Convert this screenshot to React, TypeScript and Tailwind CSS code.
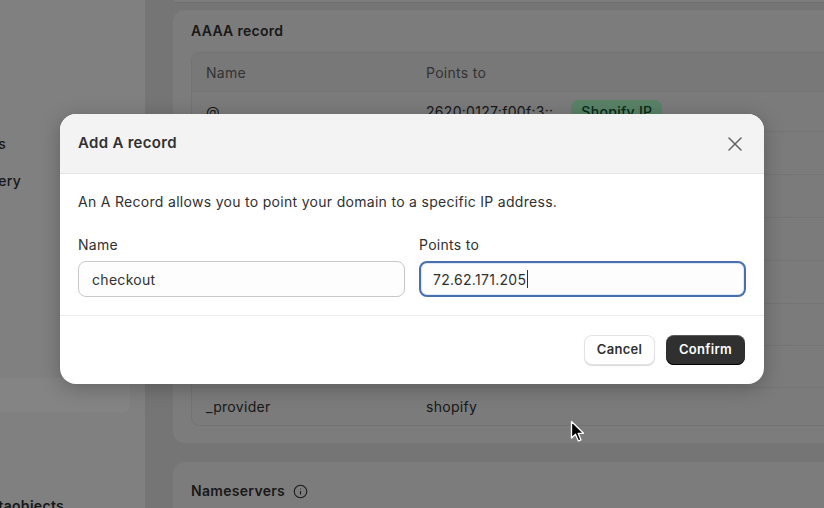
import { X, Info } from 'lucide-react';

export default function App() {
    return (
        <div className="relative h-[508px] w-[824px] overflow-hidden bg-[#dedede] font-['Inter',sans-serif] text-[14px] tracking-[0.3px] text-[#303030]">
            <div className="flex h-full">
                {/* Settings sidebar (scrolled, text cut at the left edge) */}
                <aside className="w-[145px] shrink-0 bg-[#f2f2f2] pt-[134px] font-medium">
                    <div className="flex h-5 w-[6px] items-center justify-end whitespace-nowrap leading-5">Customer accounts</div>
                    <div className="mt-[17px] flex h-5 w-[21px] items-center justify-end whitespace-nowrap leading-5">Shipping and delivery</div>
                    <div className="mt-[187px] h-[34px] w-[130px] rounded-r-lg bg-[#fafafa]" />
                    <div className="mt-[84px] flex h-5 w-[64px] items-center justify-end whitespace-nowrap font-semibold leading-5">Metaobjects</div>
                </aside>

                {/* Main content */}
                <main className="flex-1 pl-[28px]">
                    <div className="h-[3px] w-[700px] rounded-b-xl border-b border-[#d4d4d4] bg-[#ebebeb]" />

                    {/* AAAA record card */}
                    <section className="mt-[7px] w-[700px] rounded-xl bg-[#ebebeb] pb-[17px] pl-[18px] pt-[11px]">
                        <h3 className="font-semibold leading-5">AAAA record</h3>
                        <div className="mt-[11px] overflow-hidden rounded-l-lg border border-[#d8d8d8] bg-[#e8e8e8]">
                            <div className="grid h-[38px] grid-cols-[220px_1fr] items-center bg-[#e3e3e3] px-[14px] text-[#616161]">
                                <span>Name</span>
                                <span>Points to</span>
                            </div>
                            <div className="grid h-[40px] grid-cols-[220px_1fr] items-center border-t border-[#dcdcdc] px-[14px]">
                                <span>@</span>
                                <div className="flex items-center gap-[18px]">
                                    <span>2620:0127:f00f:3::</span>
                                    <span className="rounded-lg bg-[#a8f5c0] px-[10px] py-px font-medium text-[#0c5132]">Shopify IP</span>
                                </div>
                            </div>
                            {[43, 43, 43, 43, 42, 42].map((h, i) => (
                                <div key={i} style={{ height: h }} className="border-t border-[#dcdcdc]" />
                            ))}
                            <div className="grid h-[38px] grid-cols-[220px_1fr] items-center border-t border-[#dcdcdc] px-[14px]">
                                <span>_provider</span>
                                <span>shopify</span>
                            </div>
                        </div>
                    </section>

                    {/* Nameservers card */}
                    <section className="mt-[19px] h-[80px] w-[700px] rounded-xl bg-[#ebebeb] pl-[18px] pt-[19px]">
                        <div className="flex items-center gap-2">
                            <h3 className="font-semibold leading-5">Nameservers</h3>
                            <Info size={15} strokeWidth={1.75} className="text-[#303030]" />
                        </div>
                    </section>
                </main>
            </div>

            {/* Modal overlay */}
            <div className="absolute inset-0 flex justify-center bg-black/[0.47] pt-[114px]">
                <div className="h-fit w-[704px] overflow-hidden rounded-2xl bg-white shadow-[0_4px_20px_rgba(0,0,0,0.25)]">
                    {/* Header */}
                    <div className="flex h-[60px] items-center justify-between border-b border-[#e3e3e3] bg-[#f3f3f3] pl-[18px] pr-[17px]">
                        <h2 className="text-[15px] font-semibold">Add A record</h2>
                        <button className="flex h-6 w-6 items-center justify-center text-[#616161]">
                            <X size={24} strokeWidth={1.5} />
                        </button>
                    </div>

                    {/* Body */}
                    <div className="px-[18px] pb-[18px] pt-[18px]">
                        <p className="leading-5">An A Record allows you to point your domain to a specific IP address.</p>
                        <div className="mt-[23px] grid grid-cols-2 gap-[14px]">
                            <div>
                                <label className="block leading-5">Name</label>
                                <div className="mt-[6px] flex h-[36px] items-center rounded-lg border border-[#c8c8c8] bg-[#fdfdfd] px-[13px]">
                                    checkout
                                </div>
                            </div>
                            <div>
                                <label className="block leading-5">Points to</label>
                                <div className="mt-[6px] flex h-[36px] items-center rounded-lg border-2 border-[#4a6fae] bg-[#fdfdfd] px-[12px] shadow-[inset_0_0_0_1px_#dfe8f7]">
                                    72.62.171.205
                                    <span className="ml-px h-[18px] w-px bg-[#303030]" />
                                </div>
                            </div>
                        </div>
                    </div>

                    {/* Footer */}
                    <div className="flex justify-end gap-[11px] border-t border-[#ebebeb] px-[19px] py-[19px]">
                        <button className="h-[30px] w-[71px] rounded-lg border border-[#e3e3e3] bg-white text-[13px] font-semibold text-[#303030] shadow-[0_1px_1px_rgba(0,0,0,0.15)]">
                            Cancel
                        </button>
                        <button className="h-[30px] w-[79px] rounded-lg bg-[#303030] text-[13px] font-semibold text-white shadow-[inset_0_-1px_0_#000,inset_0_1px_0_rgba(255,255,255,0.2)]">
                            Confirm
                        </button>
                    </div>
                </div>
            </div>

            {/* Mouse pointer */}
            <svg className="absolute left-[570px] top-[420px]" width="16" height="24" viewBox="0 0 16 24">
                <path d="M1.5 1.5 L1.5 18 L5.5 14.2 L8.4 21 L11 19.9 L8.2 13.3 L13.5 13.3 Z" fill="#000" stroke="#fff" strokeWidth="1.3" strokeLinejoin="round" />
            </svg>
        </div>
    );
}
